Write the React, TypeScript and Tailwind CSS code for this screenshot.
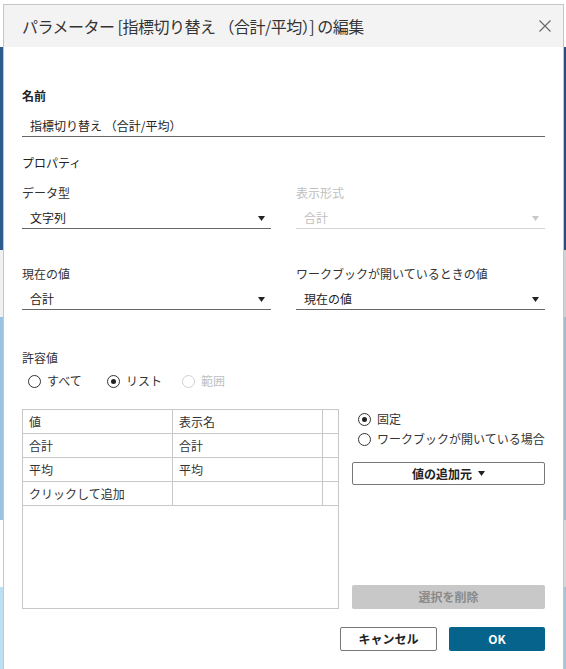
type RadioProps = { label: string; checked?: boolean; disabled?: boolean; className?: string };

function Radio({ label, checked, disabled, className }: RadioProps) {
    return (
        <div className={`flex items-center gap-[6px] ${className ?? ''}`}>
            <span
                className={`flex h-[13px] w-[13px] items-center justify-center rounded-full border ${
                    disabled ? 'border-[#d0d0d0]' : 'border-[#333]'
                }`}
            >
                {checked && <span className="h-[5px] w-[5px] rounded-full bg-[#222]" />}
            </span>
            <span className={disabled ? 'text-[#c0c0c0]' : 'text-[#333]'}>{label}</span>
        </div>
    );
}

function Arrow({ disabled }: { disabled?: boolean }) {
    return (
        <svg width="7" height="5" viewBox="0 0 7 5" className="shrink-0">
            <polygon points="0,0 7,0 3.5,5" fill={disabled ? '#c8c8c8' : '#222'} />
        </svg>
    );
}

type SelectProps = { label: string; value: string; disabled?: boolean };

function SelectField({ label, value, disabled }: SelectProps) {
    return (
        <div className="flex flex-col">
            <div className={`leading-4 ${disabled ? 'text-[#c0c0c0]' : 'text-[#333]'}`}>{label}</div>
            <div
                className={`mt-[9px] flex items-center justify-between border-b pb-[2px] pl-[8px] pr-[6px] leading-4 ${
                    disabled ? 'border-[#d4d4d4] text-[#c0c0c0]' : 'border-[#666] text-[#222]'
                }`}
            >
                <span>{value}</span>
                <Arrow disabled={disabled} />
            </div>
        </div>
    );
}

const rows = [
    { value: '値', name: '表示名' },
    { value: '合計', name: '合計' },
    { value: '平均', name: '平均' },
    { value: 'クリックして追加', name: '' },
];

export default function App() {
    return (
        <div className="flex h-[669px] w-[566px] overflow-hidden bg-white font-['Noto_Sans_CJK_JP','Noto_Sans',sans-serif] text-[12px] text-[#333]">
            {/* app behind the dialog, left edge */}
            <div className="flex w-[3px] shrink-0 flex-col">
                <div className="h-[47px] bg-white" />
                <div className="h-[203px] bg-[#2d5b8a]" />
                <div className="h-[67px] bg-[#eef0f2]" />
                <div className="h-[203px] bg-[#9ac3e3]" />
                <div className="h-[67px] bg-white" />
                <div className="flex-1 bg-[#bcdff2]" />
            </div>

            <div className="mt-[4px] flex w-[561px] shrink-0 flex-col border-x border-t border-[#c6c6c6] bg-white">
                <div className="flex h-[42px] items-center justify-between bg-[#f3f3f3] pl-[18px] pr-[12px]">
                    <h1 className="text-[16px] leading-5 tracking-[-0.5px] text-[#333]">
                        パラメーター [指標切り替え （合計/平均）] の編集
                    </h1>
                    <svg width="12" height="12" viewBox="0 0 12 12" className="shrink-0">
                        <path d="M0.5 0.5 L11.5 11.5 M11.5 0.5 L0.5 11.5" stroke="#666" strokeWidth="1.1" fill="none" />
                    </svg>
                </div>

                <div className="flex flex-col px-[18px] pt-[41px]">
                    <div className="font-bold leading-4 text-[#222]">名前</div>
                    <div className="mt-[14px] border-b border-[#666] pb-[2px] pl-[8px] leading-4 text-[#222]">
                        指標切り替え （合計/平均）
                    </div>

                    <div className="mt-[18px] leading-4 text-[#222]">プロパティ</div>

                    <div className="mt-[14px] grid grid-cols-2 gap-x-[25px]">
                        <SelectField label="データ型" value="文字列" />
                        <SelectField label="表示形式" value="合計" disabled />
                    </div>

                    <div className="mt-[37px] grid grid-cols-2 gap-x-[25px]">
                        <SelectField label="現在の値" value="合計" />
                        <SelectField label="ワークブックが開いているときの値" value="現在の値" />
                    </div>

                    <div className="mt-[40px] leading-4">許容値</div>
                    <div className="mt-[7px] flex pl-[6px] leading-4">
                        <Radio label="すべて" className="w-[79px]" />
                        <Radio label="リスト" checked className="w-[75px]" />
                        <Radio label="範囲" disabled />
                    </div>

                    <div className="mt-[20px] flex gap-[13px]">
                        <div className="flex h-[200px] w-[317px] shrink-0 flex-col border border-[#c8c8c8]">
                            {rows.map((r) => (
                                <div key={r.value} className="flex h-[24px] border-b border-[#c8c8c8] leading-[23px]">
                                    <div className="w-[150px] border-r border-[#c8c8c8] pl-[6px]">{r.value}</div>
                                    <div className="w-[150px] border-r border-[#c8c8c8] pl-[6px]">{r.name}</div>
                                    <div className="flex-1" />
                                </div>
                            ))}
                        </div>

                        <div className="flex flex-1 flex-col">
                            <Radio label="固定" checked className="mt-[2px] pl-[6px] leading-4" />
                            <Radio label="ワークブックが開いている場合" className="mt-[4px] pl-[6px] leading-4" />
                            <button className="mt-[15px] flex h-[23px] items-center justify-center gap-[6px] rounded-[2px] border border-[#777] bg-white font-bold text-[#222]">
                                値の追加元
                                <Arrow />
                            </button>
                            <button className="mt-auto h-[24px] rounded-[2px] bg-[#c8c8c8] font-bold text-[#8a8a8a]">
                                選択を削除
                            </button>
                        </div>
                    </div>

                    <div className="mt-[18px] flex justify-end gap-[12px]">
                        <button className="h-[24px] w-[97px] rounded-[2px] border border-[#777] bg-white font-bold text-[#222]">
                            キャンセル
                        </button>
                        <button className="h-[24px] w-[96px] rounded-[2px] bg-[#05638c] font-bold text-white">
                            OK
                        </button>
                    </div>
                </div>
            </div>

            {/* app behind the dialog, right edge */}
            <div className="flex w-[2px] shrink-0 flex-col">
                <div className="h-[47px] bg-white" />
                <div className="h-[203px] bg-[#2b4f7c]" />
                <div className="h-[67px] bg-[#cfd3d6]" />
                <div className="h-[203px] bg-[#a9bccc]" />
                <div className="h-[67px] bg-[#d6d9dc]" />
                <div className="flex-1 bg-[#a9c4d6]" />
            </div>
        </div>
    );
}
